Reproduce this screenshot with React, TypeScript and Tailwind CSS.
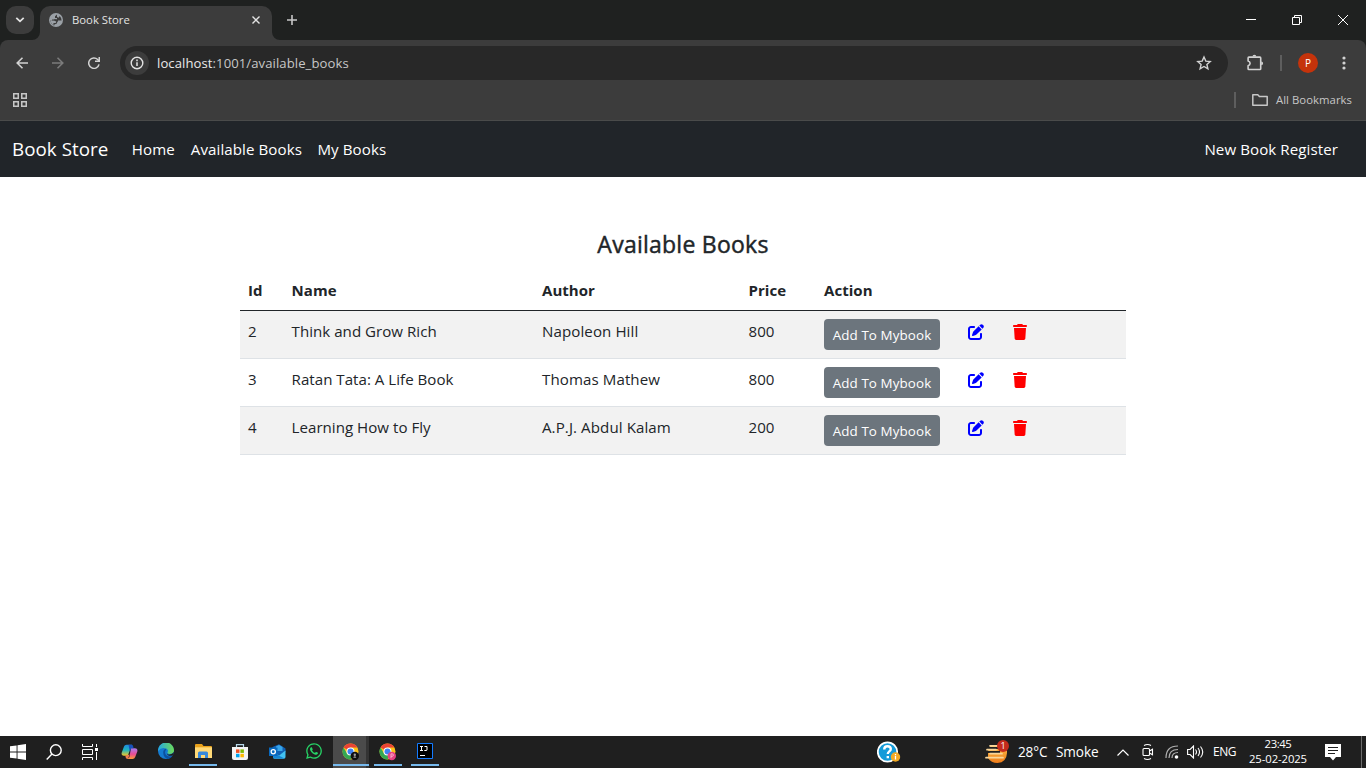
import type { ReactNode } from "react";
import { FaPenToSquare, FaTrash, FaWhatsapp } from "react-icons/fa6";

const books = [
  { id: 2, name: "Think and Grow Rich", author: "Napoleon Hill", price: 800 },
  { id: 3, name: "Ratan Tata: A Life Book", author: "Thomas Mathew", price: 800 },
  { id: 4, name: "Learning How to Fly", author: "A.P.J. Abdul Kalam", price: 200 },
];

function TabStrip() {
  return (
    <div className="flex h-10 bg-[#1f2120]">
      <div className="ml-1.5 mt-1.5 flex h-7 w-7 items-center justify-center rounded-[10px] bg-[#3c3c3c]">
        <svg width="10" height="8" viewBox="0 0 10 8" fill="none" stroke="#e3e3e3" strokeWidth="1.8">
          <path d="M1.3 1.8 5 5.3 8.7 1.8" />
        </svg>
      </div>
      <div className="relative ml-1.5 mt-1.5 flex h-[34px] w-[232px] items-center rounded-t-[10px] bg-[#3c3c3c] pb-1.5">
        <svg className="absolute -left-2 bottom-0" width="8" height="8"><path d="M8 0v8H0a8 8 0 0 0 8-8" fill="#3c3c3c" /></svg>
        <svg className="absolute -right-2 bottom-0" width="8" height="8"><path d="M0 0v8h8a8 8 0 0 1-8-8" fill="#3c3c3c" /></svg>
        <svg className="ml-[9px]" width="14" height="14" viewBox="0 0 14 14">
          <circle cx="7" cy="7" r="7" fill="#9aa0a6" />
          <path d="M8 1.400 6 3.200V5h2v1.200H5.500L4.300 7.300H1.400Q1.700 11 5 12.400V10.200H7.200V8.600H9V7.400h3.600Q12.500 4.700 10.700 3L9.700 4.800 8 4Z" fill="#3c3c3c" />
          <path d="M1.500 7.300h3.200L7.200 8.400v1.900L5 10.200v2.200Q1.800 11 1.500 7.300Z" fill="#9aa0a6" />
          <path d="M3 7h3.500L8 8.600 7 10.400 5 10.600v1.700" fill="none" stroke="#3c3c3c" strokeWidth="1.100" />
        </svg>
        <span className="ml-[9px] mt-px flex-1 text-[11.3px] tracking-[0.01px] text-[#e3e3e3]">Book Store</span>
        <svg className="mr-3" width="8" height="8" viewBox="0 0 8 8" stroke="#e3e3e3" strokeWidth="1.4"><path d="m.5.5 7 7m0-7-7 7" /></svg>
      </div>
      <svg className="ml-[15px] mt-[15px]" width="10" height="10" viewBox="0 0 10 10" stroke="#c7c7c7" strokeWidth="1.6"><path d="M0 5h10M5 0v10" /></svg>
      <div className="ml-auto flex">
        <div className="flex w-[46px] items-center justify-center"><svg width="10" height="10"><path d="M0 4.5h10" stroke="#fff" /></svg></div>
        <div className="flex w-[46px] items-center justify-center"><svg width="10" height="10" fill="none" stroke="#fff"><path d="M.5 2.5h7v7h-7zM2.5 2.5v-2h7v7h-2" /></svg></div>
        <div className="flex w-[46px] items-center justify-center"><svg width="10" height="10" stroke="#fff"><path d="m0 0 10 10M10 0 0 10" /></svg></div>
      </div>
    </div>
  );
}

function Toolbar() {
  return (
    <div className="bg-[#1f2120]">
      <div className="flex h-[46px] items-center rounded-t-[8px] bg-[#3c3c3c]">
        <svg className="ml-4" width="12" height="12" viewBox="0 0 12 12" fill="none" stroke="#d2d2d2" strokeWidth="1.6"><path d="M12 6H1.2M6.5.7 1.2 6l5.3 5.3" /></svg>
        <svg className="ml-6" width="12" height="12" viewBox="0 0 12 12" fill="none" stroke="#7b7b7b" strokeWidth="1.6"><path d="M0 6h10.8M5.5.7 10.8 6l-5.3 5.3" /></svg>
        <svg className="ml-6" width="12" height="12" viewBox="0 0 12 12"><path d="M11 7.3A5.2 5.2 0 1 1 9.7 2.6L11 4" fill="none" stroke="#d2d2d2" strokeWidth="1.5" /><path d="M12 0v5H7V3.6h3.5V0Z" fill="#d2d2d2" /></svg>
        <div className="ml-5 flex h-[34px] w-[1108px] items-center rounded-full bg-[#282828]">
          <div className="ml-[5px] flex h-6 w-6 items-center justify-center rounded-full bg-[#3c3c3c]">
            <svg width="14" height="14" viewBox="0 0 14 14"><circle cx="7" cy="7" r="5.8" fill="none" stroke="#e3e3e3" strokeWidth="1.4" /><path d="M7 6.2V10M7 3.6v1.6" stroke="#e3e3e3" strokeWidth="1.5" /></svg>
          </div>
          <span className="ml-2 mt-px flex-1 text-[13.1px] tracking-[0.08px] text-[#c7c7c7]"><span className="text-[#e8e8e8]">localhost</span>:1001/available_books</span>
          <svg className="mr-4" width="16" height="16" viewBox="0 0 16 16"><path d="m8 2 1.8 4.1 4.4.4-3.3 2.9 1 4.4L8 11.5l-3.9 2.3 1-4.4-3.3-2.9 4.4-.4Z" fill="none" stroke="#d2d2d2" strokeWidth="1.4" /></svg>
        </div>
        <svg className="ml-[18px]" width="18" height="18" viewBox="0 0 18 18">
          <path d="M2.9 3.1h11q.8 0 .8.8v10.8q0 .8-.8.8h-11q-.8 0-.8-.8v-3q2-.6 2-2.400t-2-2.400V3.900q0-.8.8-.8Z" fill="none" stroke="#d2d2d2" strokeWidth="1.6" strokeLinejoin="round" />
          <path d="M6.500 2.600a1.900 1.900 0 0 1 3.800 0ZM15.200 7.400a1.900 1.900 0 0 1 0 3.800Z" fill="#d2d2d2" />
        </svg>
        <span className="ml-[16px] h-4 w-[2px] bg-[#5e5e5e]" />
        <span className="ml-4 flex h-5 w-5 items-center justify-center rounded-full bg-[#c5330b] text-[10px] leading-none text-white">P</span>
        <svg className="ml-6" width="4" height="14" fill="#d2d2d2"><circle cx="2" cy="2" r="1.6" /><circle cx="2" cy="7" r="1.6" /><circle cx="2" cy="12" r="1.6" /></svg>
      </div>
      <div className="flex h-[35px] items-center border-b border-[#4a4b4a] bg-[#3c3c3c] pb-px">
        <svg className="ml-[13px] mt-[-5px]" width="14" height="14" fill="none" stroke="#c7c7c7" strokeWidth="1.5"><path d="M.75.75h4.5v4.5H.75zM8.75.75h4.5v4.5h-4.5zM.75 8.75h4.5v4.5H.75zM8.75 8.75h4.5v4.5h-4.5z" /></svg>
        <span className="ml-auto mt-[-5px] h-4 w-[2px] bg-[#5e5e5e]" />
        <svg className="ml-4 mt-[-5px]" width="16" height="12" fill="none" stroke="#c7c7c7" strokeWidth="1.5" strokeLinejoin="round"><path d="M.8.8h5l1.6 1.7h7.8v8.7H.8Z" /></svg>
        <span className="ml-2 mr-[14px] mt-[-5px] text-[11.3px] tracking-[0.06px] text-[#c7c7c7]">All Bookmarks</span>
      </div>
    </div>
  );
}

function Page() {
  return (
    <main className="flex-1 bg-white text-[#212529]">
      <nav className="flex h-14 items-center bg-[#212529] px-3 text-[15.1px] tracking-[0.08px] text-white">
        <span className="mr-[23.5px] mt-px text-[18.8px] tracking-[0.03px]">Book Store</span>
        <span className="mr-4">Home</span>
        <span className="mr-[15.5px]">Available Books</span>
        <span>My Books</span>
        <span className="ml-auto mr-4">New Book Register</span>
      </nav>
      <section className="mx-auto w-[886px] pt-[52px]">
        <h3 className="text-center text-[23px] leading-[30px] tracking-[0.25px] [-webkit-text-stroke:0.45px_#212529]">Available Books</h3>
        <table className="mt-[11px] w-full table-fixed border-collapse text-left text-[15.1px] leading-6 tracking-[0.05px]">
          <colgroup>
            <col className="w-[43.6px]" /><col className="w-[250.4px]" /><col className="w-[206.5px]" /><col className="w-[75.5px]" /><col />
          </colgroup>
          <thead>
            <tr className="h-10 border-b border-[#212529]">
              {["Id", "Name", "Author", "Price", "Action"].map((h) => <th key={h} className="px-2 pt-px text-[15px] font-bold">{h}</th>)}
            </tr>
          </thead>
          <tbody>
            {books.map((b) => (
              <tr key={b.id} className="h-12 border-b border-[#dee2e6] align-top odd:bg-[#f2f2f2]">
                <td className="px-2 pt-2">{b.id}</td>
                <td className="px-2 pt-2 tracking-[0.02px]">{b.name}</td>
                <td className="px-2 pt-2 tracking-[0.09px]">{b.author}</td>
                <td className="px-2 pt-2">{b.price}</td>
                <td className="px-2 pt-2">
                  <div className="flex items-start">
                    <button className="h-[31px] w-[116px] rounded-[4px] bg-[#6c757d] pt-px text-[13.4px] tracking-[0.1px] text-white">Add To Mybook</button>
                    <FaPenToSquare className="ml-7 mt-[5px]" size={16} color="#0000ff" />
                    <FaTrash className="ml-7 mt-[5px]" size={16} color="#ff0000" />
                  </div>
                </td>
              </tr>
            ))}
          </tbody>
        </table>
      </section>
    </main>
  );
}

function ChromeLogo({ badge, dark }: { badge: string; dark?: boolean }) {
  return (
    <svg width="18" height="18" viewBox="0 0 18 18">
      <circle cx="8.5" cy="8.5" r="8" fill="#fbc116" />
      <path d="M8.5 8.5 1.57 4.5A8 8 0 0 1 15.43 4.5H8.5Z" fill="#ea4335" />
      <path d="M1.57 4.5A8 8 0 0 0 8.5 16.5L12 10.5 8.5 8.5 5 10.5Z" fill="#34a853" />
      <circle cx="8.5" cy="8.5" r="4" fill="#fff" /><circle cx="8.5" cy="8.5" r="3" fill="#3f82f0" />
      <circle cx="12.8" cy="13" r="4.2" fill={badge} />
      {dark ? <path d="M12.8 10.6a1.2 1.2 0 1 1 0 2.4 1.2 1.2 0 0 1 0-2.4M11.3 14.800a1.500 1.500 0 0 1 3 0Z" fill="#a0a0a0" /> : <path d="M12 15.2v-4.3h1.2a1.2 1.2 0 0 1 0 2.4H12" fill="none" stroke="#ffc1d4" strokeWidth=".8" />}
    </svg>
  );
}

function Slot({ children, open }: { children: ReactNode; open?: boolean }) {
  return (
    <div className="relative flex w-[37px] items-center justify-center pl-px">
      {children}
      {open && <span className="absolute bottom-0.5 left-[5px] h-[2px] w-7 bg-[#76b9ed]" />}
    </div>
  );
}

function Taskbar() {
  return (
    <footer className="flex h-8 bg-[#1f1f1f] text-white">
      <div className="flex w-9 items-center justify-center"><svg width="16" height="16" fill="#fff"><path d="M0 2.3 6.6 1.4v6.1H0ZM7.5 1.3 16 0v7.5H7.5ZM0 8.4h6.6v6.2L0 13.7ZM7.5 8.4H16V16l-8.5-1.2Z" /></svg></div>
      <div className="flex w-9 items-center justify-center"><svg width="16" height="16" fill="none" stroke="#fff" strokeWidth="1.4"><circle cx="9.8" cy="6.2" r="5.4" /><path d="M6 10 0.7 15.5" /></svg></div>
      <div className="flex w-9 items-center justify-center"><svg width="16" height="16" fill="none" stroke="#fff"><path d="M.5 0v2.5h10V0M.5 16v-2.5h10V16M.5 5.5h10v5H.5zM14.5 0v3M14.5 8v8" /><path d="M13 4h3v3h-3z" fill="#fff" stroke="none" /></svg></div>
      <div className="ml-0.5 flex">
        <Slot>
          <svg width="17" height="16" viewBox="0 0 17 16">
            <defs>
              <linearGradient id="copilotLeft" x1="0" y1="0" x2="0" y2="1"><stop stopColor="#2089df" /><stop offset=".5" stopColor="#20b7bb" /><stop offset="1" stopColor="#f4c827" /></linearGradient>
              <linearGradient id="copilotRight" x1="0" y1="0" x2="0" y2="1"><stop stopColor="#a87cf1" /><stop offset=".55" stopColor="#e84c94" /><stop offset="1" stopColor="#fd9b35" /></linearGradient>
            </defs>
            <path d="M5.500.7h5.5L6.800 11.700H3Q.3 11.700.6 9L3 2.500Q3.500.7 5.500.7Z" fill="url(#copilotLeft)" />
            <path d="M10 4.200h3.800q3 0 2.600 3L14.200 13q-.7 2-2.700 2H6.300l2-1.700Z" fill="url(#copilotRight)" />
            <path d="M7.500.7h3.400q1.200 0 1.700 3.500H10L8.800 7.500Z" fill="#1851bd" />
            <path d="M4.300 11.700 8.500 10.500l-1 3Q7 15 6 15 4.800 15 4.300 11.700Z" fill="#ee7c50" />
          </svg>
        </Slot>
        <Slot>
          <svg className="mb-0.5" width="16" height="16" viewBox="0 0 16 16">
            <defs><linearGradient id="edgeTop"><stop stopColor="#25a7e4" /><stop offset="1" stopColor="#6edc55" /></linearGradient></defs>
            <circle cx="8" cy="8" r="8" fill="#147bd1" />
            <path d="M0 8A8 8 0 0 1 16 7q0 4-4.5 4-2.7-.2-2-1.7Q11 7 8 5.5 3.5 3.7 0 8Z" fill="url(#edgeTop)" />
            <path d="M5.2 9Q5.5 6 8.3 5.8 5 12 11 13.5q2.4 0 4-1.3A8 8 0 0 1 9.7 16Q5.2 14.5 5.2 9Z" fill="#0c509f" />
            <path d="M9.3 9.5q-1 2 2.2 2 2.8 0 4.5-2.4l-.8 2.8q-3 1.7-5.5 0-1.4-1-.4-2.4Z" fill="#1f1f1f" />
          </svg>
        </Slot>
        <Slot open>
          <svg className="mb-0.5" width="17" height="15" viewBox="0 0 17 15"><path d="M0 1Q0 0 1 0h6l1.5 2H16q1 0 1 1v10H0Z" fill="#e9a11b" /><path d="M0 3.3h17V14H0Z" fill="#ffd977" /><path d="M3 14V9q0-1.5 1.5-1.5h7Q13 7.5 13 9v5h-3v-3H6v3Z" fill="#3789dc" /></svg>
        </Slot>
        <Slot>
          <svg width="16" height="16" viewBox="0 0 16 16"><path d="M4.5 4V.7h7V4" fill="none" stroke="#b8d9ed" strokeWidth="1.2" /><path d="M0 3h16v11q0 2-2 2H2q-2 0-2-2Z" fill="#f4f4f4" /><path d="M4 5.4h3.5v3.5H4Z" fill="#f25022" /><path d="M8.4 5.4h3.5v3.5H8.4Z" fill="#7fba00" /><path d="M4 9.8h3.5v3.5H4Z" fill="#00a4ef" /><path d="M8.4 9.8h3.5v3.5H8.4Z" fill="#ffb900" /></svg>
        </Slot>
        <Slot>
          <svg className="mb-0.5" width="17" height="15" viewBox="0 0 17 15"><path d="M3.5 3 10 .2 16.5 4.5V8l-8 4-5-3Z" fill="#1261b4" /><path d="M7 2.5 10 1l3.5 2v4H7Z" fill="#38a5e8" /><path d="m4 8 6 3.5 6.5-5V13q0 1.7-1.7 1.7H5.5Q4 14.7 4 13Z" fill="#42c3f3" /><path d="m4 8.5 11.5 6H5.5Q4 14.5 4 13Z" fill="#1685d5" /><path d="M0 3.5h8.5V12H0Z" fill="#096ac0" /><circle cx="4.25" cy="7.75" r="2.1" fill="none" stroke="#fff" strokeWidth="1.3" /></svg>
        </Slot>
        <Slot><FaWhatsapp className="mb-0.5" size={18} color="#27d366" /></Slot>
        <div className="relative -mr-px ml-px flex w-[36px] items-center justify-center bg-gradient-to-r from-[#4b4b4b] from-[91%] to-[#343434] to-[91%]">
          <ChromeLogo badge="#101010" dark /><span className="absolute bottom-0.5 left-0 h-[2px] w-full bg-[#76b9ed]" />
        </div>
        <div className="ml-px flex">
          <Slot open><ChromeLogo badge="#e54083" /></Slot>
          <Slot open>
            <svg className="mb-0.5" width="16" height="16"><path d="M.5.5h15v15H.5Z" fill="#000" stroke="#147bff" /><path d="M3 3.5h3M4.500 3.500V8M3 7.500h3M7.500 3.500H10V7q0 .5-1 .5H7.300M3 12.500h5" fill="none" stroke="#fff" /></svg>
          </Slot>
        </div>
      </div>
      <div className="ml-auto flex items-center">
        <svg width="24" height="22" viewBox="0 0 24 22"><circle cx="10.5" cy="11" r="9.7" fill="#149bd9" stroke="#fff" strokeWidth="1.8" /><path d="M7.2 8.5Q7.3 5.2 10.5 5.2t3.3 2.7c0 2.5-3 2.4-3 5M10.8 15v2.3" fill="none" stroke="#fff" strokeWidth="2.4" /><circle cx="18.5" cy="16" r="4.7" fill="#f2aa24" /><path d="M18.5 15v3.5M18.5 13v1.2" stroke="#fff" strokeWidth="1.3" /></svg>
        <svg className="ml-[84px] mr-px" width="25" height="24" viewBox="0 0 25 24">
          <defs><linearGradient id="smoke" x1="0" y1="0" x2="0" y2="1"><stop stopColor="#ffc84d" /><stop offset="1" stopColor="#ee7b19" /></linearGradient></defs>
          <path d="M3 12q0-7 9-9h10v10q-.5 9.5-9.5 10Q6 23 3 18Z" fill="url(#smoke)" />
          <path d="M0 3h15v2H0ZM0 7h15v2H0ZM0 11h15v2H0ZM0 15h3v2H0Z" fill="#1f1f1f" />
          <path d="M5 5.8h7M2 9.7h9M5 13.7h12M1 17.7h17" stroke="#f8d59a" strokeWidth="1.7" strokeLinecap="round" />
          <circle cx="18" cy="6" r="6" fill="#c42b1c" />
          <text x="18" y="9.3" textAnchor="middle" fontSize="9" fill="#fff">1</text>
        </svg>
        <span className="ml-[7px] w-[38px] whitespace-nowrap text-[13.6px] tracking-[-0.15px]">28°C</span>
        <span className="w-[61px] whitespace-nowrap text-[13.6px] tracking-[-0.1px]">Smoke</span>
        <svg width="12" height="7" fill="none" stroke="#fff" strokeWidth="1.2"><path d="m.5 6.5 5.5-5.5 5.5 5.5" /></svg>
        <svg className="ml-[13px]" width="12" height="18" fill="none" stroke="#fff" strokeWidth="1.1"><path d="M2 5.5h4.5q1 0 1 1v5q0 1-1 1H2q-1 0-1-1v-5q0-1 1-1ZM7.5 8 10.5 6.3v5.4L7.5 10M2 2.5q3.5-2 7 0M2 15.5q3.5 2 7 0" /></svg>
        <svg className="ml-[11px]" width="14" height="14" fill="none"><path d="M1 13Q1 1 13 1M4 13q0-8.5 9-8.5M7 13q0-5.5 6-5.5" stroke="#b0b0b0" strokeWidth="1.2" /><circle cx="11.5" cy="12" r="1.8" fill="#fff" /></svg>
        <svg className="ml-[8px]" width="17" height="14" fill="none" stroke="#fff" strokeWidth="1.1"><path d="M.6 4.5h2.5L6.5 1v12L3.1 9.5H.6ZM8.5 4.5q2 2.5 0 5M11 3q3 4 0 8M13.5 1.5q4.5 5.5 0 11" /></svg>
        <span className="ml-[9px] mr-px w-[28px] text-[12px] tracking-[-0.5px]">ENG</span>
        <div className="w-[72px] pb-0.5 text-center text-[11.3px] leading-[15.5px] tracking-[-0.1px]"><div className="tracking-[-0.4px]">23:45</div><div>25-02-2025</div></div>
        <svg className="ml-[11px]" width="16" height="17"><path d="M0 0h16v13h-5l-3 3.5L5 13H0Z" fill="#fff" /><path d="M3 3.5h10M3 6.5h10M3 9.5h7" stroke="#1f1f1f" /></svg>
        <span className="ml-[20px] mr-1 h-8 w-px bg-[#6b6b6b]" />
      </div>
    </footer>
  );
}

export default function App() {
  return (
    <div className="flex h-screen w-screen flex-col overflow-hidden font-['Open_Sans','Noto_Sans',sans-serif]">
      <TabStrip />
      <Toolbar />
      <Page />
      <Taskbar />
    </div>
  );
}
